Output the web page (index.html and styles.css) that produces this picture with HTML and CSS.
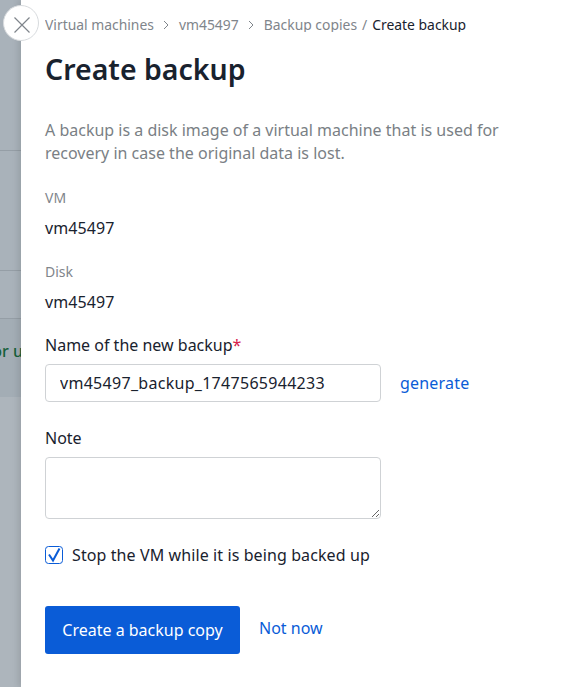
FILE: index.html
```html
<!DOCTYPE html>
<html lang="en">
<head>
<meta charset="utf-8">
<title>Create backup</title>
<link rel="stylesheet" href="styles.css">
</head>
<body>
<div class="backdrop">
  <div class="bg-row r1"></div>
  <div class="bg-row r2"></div>
  <div class="bg-row r3"></div>
  <div class="bg-row r4"><span class="bg-text">or u</span></div>
  <div class="bg-rest"></div>
</div>
<main class="panel">
  <button class="close" type="button" aria-label="Close">
    <svg width="18" height="18" viewBox="0 0 18 18"><path d="M1.5 1.5l15 15M16.5 1.5l-15 15" stroke="#7f858b" stroke-width="1.2" fill="none"/></svg>
  </button>
  <nav class="crumbs">
    <span>Virtual machines</span><svg class="chev" width="6" height="10" viewBox="0 0 6 10"><path d="M1 1l4 4-4 4" stroke="#7f858b" stroke-width="1" fill="none"/></svg>
    <span>vm45497</span><svg class="chev" width="6" height="10" viewBox="0 0 6 10"><path d="M1 1l4 4-4 4" stroke="#7f858b" stroke-width="1" fill="none"/></svg>
    <span>Backup copies</span><span class="slash">/</span><span class="current">Create backup</span>
  </nav>
  <h1>Create backup</h1>
  <p class="intro">A backup is a disk image of a virtual machine that is used for recovery in case the original data is lost.</p>
  <div class="info"><div class="info-label">VM</div><div class="info-value">vm45497</div></div>
  <div class="info"><div class="info-label">Disk</div><div class="info-value">vm45497</div></div>
  <label class="field-label name-label" for="name">Name of the new backup<span class="req">*</span></label>
  <div class="name-row">
    <input id="name" class="input" type="text" value="vm45497_backup_1747565944233">
    <a class="link generate" href="#">generate</a>
  </div>
  <label class="field-label note-label" for="note">Note</label>
  <textarea id="note" class="textarea"></textarea>
  <label class="check">
    <svg class="box" width="18" height="18" viewBox="0 0 18 18"><rect x=".5" y=".5" width="17" height="17" rx="3" fill="#fff" stroke="#0a5cd7"/><path d="M4 8.5l4 6 6.5-12" stroke="#0a5cd7" stroke-width="2" fill="none"/></svg>
    <span>Stop the VM while it is being backed up</span>
  </label>
  <div class="actions">
    <button class="primary" type="button">Create a backup copy</button>
    <a class="link later" href="#">Not now</a>
  </div>
</main>
</body>
</html>
```
FILE: styles.css
```css
* { box-sizing: border-box; }
html, body { margin: 0; height: 100%; }
body {
  position: relative;
  width: 574px;
  height: 687px;
  overflow: hidden;
  display: flex;
  font-family: "Noto Sans", "Open Sans", sans-serif;
  font-size: 16px;
  color: #19222e;
  background: #fff;
}
.backdrop {
  width: 21px;
  flex: none;
  display: flex;
  flex-direction: column;
  background: #a9b2ba;
}
.bg-row { border-bottom: 1px solid #959ea6; }
.r1 { height: 151px; }
.r2 { height: 120px; }
.r3 { height: 48px; }
.r4 {
  height: 78px;
  background: #a3adb5;
  border-bottom: 0;
  display: flex;
  justify-content: flex-end;
  overflow: hidden;
  padding-top: 21px;
}
.bg-text {
  flex: none;
  margin-right: -2px;
  color: #17603a;
  font-size: 16px;
  font-weight: 500;
  line-height: 22px;
  white-space: nowrap;
}
.bg-rest { flex: 1; background: #adb5bc; }
.panel {
  flex: 1;
  min-width: 0;
  padding-left: 24px;
  background: #fff;
  box-shadow: -3px 0 6px rgba(0,0,0,.1);
  z-index: 1;
}
.close {
  position: absolute;
  left: 3px;
  top: 5px;
  width: 36px;
  height: 36px;
  padding: 3px 0 0 1px;
  display: flex;
  align-items: center;
  justify-content: center;
  background: #fff;
  border: 1px solid #d8dbde;
  border-radius: 50%;
}
.crumbs {
  height: 32px;
  padding-top: 15px;
  overflow: hidden;
  display: flex;
  align-items: flex-start;
  font-size: 13.9px;
  line-height: 20px;
  color: #7f858b;
  white-space: nowrap;
}
.chev { margin: 5px 10px 0 9px; flex: none; }
.slash { margin: 0 5px; }
.current { color: #19222e; }
h1 {
  margin: 18px 0 0;
  font-size: 28.5px;
  line-height: 38px;
  font-weight: 600;
}
.intro {
  margin: 31px 0 0;
  width: 480px;
  color: #7a7f85;
  line-height: 23px;
}
.info { margin-top: 23px; }
.info-label { font-size: 14px; line-height: 20px; color: #7f858b; }
.info-value { margin-top: 9px; line-height: 22px; letter-spacing: .1px; }
.field-label { display: block; line-height: 22px; }
.name-label { margin-top: 21px; }
.req { color: #d6204b; }
.name-row { display: flex; align-items: center; gap: 19px; margin-top: 8px; }
.input {
  width: 336px;
  height: 38px;
  padding: 0 14px;
  font: inherit;
  letter-spacing: .29px;
  color: #19222e;
  border: 1px solid #cfd2d5;
  border-radius: 4px;
  background: #fff;
}
.link { color: #0a5cd7; text-decoration: none; }
.generate { letter-spacing: .2px; }
.note-label { margin-top: 25px; }
.textarea {
  display: block;
  width: 336px;
  height: 62px;
  margin-top: 8px;
  font: inherit;
  border: 1px solid #cfd2d5;
  border-radius: 4px;
}
.check { display: flex; align-items: center; gap: 9px; margin-top: 25px; line-height: 22px; letter-spacing: .1px; }
.box { flex: none; }
.actions { display: flex; align-items: flex-start; margin-top: 40px; }
.primary {
  width: 195px;
  height: 48px;
  padding: 0;
  font: inherit;
  color: #fff;
  background: #0a5cd7;
  border: 0;
  border-radius: 3px;
}
.later { margin-left: 19px; margin-top: 11px; }
```
